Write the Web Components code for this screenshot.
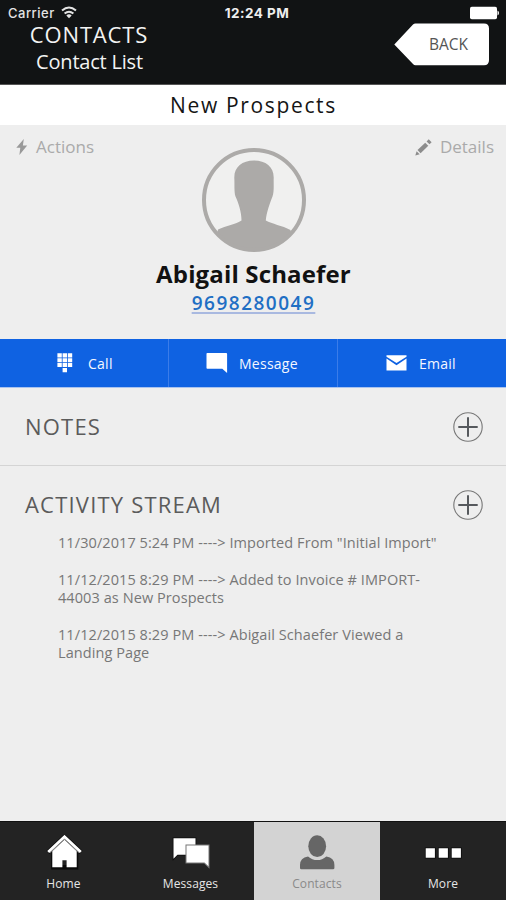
<!DOCTYPE html>
<html lang="en">
<head>
<meta charset="utf-8">
<title>Contacts</title>
<style>
  html, body {
    margin: 0;
    height: 900px;
    overflow: hidden;
  }
  body {
    background: #eee;
    font-family: "Open Sans", "Noto Sans", sans-serif;
    color: #555;
  }
</style>
</head>
<body>
<contact-app></contact-app>

<script>
const icons = {
  bolt: `<svg width="12" height="16" viewBox="0 0 12 16"><path fill="#999" d="M7.8 0 0.3 8.8h4L3.4 16 11.2 6.4H6.9z"/></svg>`,
  pencil: `<svg width="17" height="17" viewBox="0 0 17 17"><g fill="#8c8c8c"><path d="M0.3 16.5 1.6 12.2 4.7 15.3z"/><path d="M2.5 11.1 10.2 3.7 13.3 6.7 5.6 14.2z"/><path d="M11.6 2.4 13.7 0.3 16.6 3.2 14.5 5.3z"/></g></svg>`,
  keypad: `<svg width="16" height="20" viewBox="0 0 16 20"><path fill="#fff" d="M0.4 0.3h4.4v4.1H0.4zM5.6 0.3H10v4.1H5.6zM10.8 0.3h4.4v4.1h-4.4zM0.4 5.2h4.4v4.1H0.4zM5.6 5.2H10v4.1H5.6zM10.8 5.2h4.4v4.1h-4.4zM0.4 10.1h4.4v4H0.4zM5.6 10.1H10v4H5.6zM10.8 10.1h4.4v4h-4.4zM5.6 15H10v4.2H5.6z"/></svg>`,
  message: `<svg width="22" height="20" viewBox="0 0 22 20"><path fill="#fff" d="M1.3 0h18.8q1 0 1 1v19l-4.8-4.2H1.3q-.8 0-.8-.8V.8q0-.8.8-.8z"/></svg>`,
  mail: `<svg width="21" height="16" viewBox="0 0 21 16"><path fill="#fff" d="M0.5 0.3h20v1.5L10.5 8 0.5 1.8z"/><path fill="#fff" d="M0.5 3.5 10.5 10.2 20.5 3.5V15.6h-20z"/></svg>`,
  home: `<svg width="38" height="36" viewBox="0 0 38 36"><path fill="none" stroke="#0b0b0b" stroke-width="4.6" d="M3 17.400 19.500 2 36 17.400M8.500 16.500v15.800h22.500V16.500"/><path fill="#fff" d="M19.500 4 31.700 15.600V32.200H21.600v-7h-4.200v7H7.300V15.600z"/><path fill="none" stroke="#fff" stroke-width="2.900" d="M3.200 17 19.500 1.800 35.800 17"/><path fill="none" stroke="#777" stroke-width=".9" d="M5 18 19.500 4.600 34 18"/></svg>`,
  chat: `<svg width="40" height="36" viewBox="0 0 40 36"><path fill="#fff" stroke="#0b0b0b" stroke-width="1.600" paint-order="stroke" d="M2.500 3.300h22v16.500H6.500L2.500 23.800z"/><path fill="#fff" stroke="#777" stroke-width="2" paint-order="stroke" d="M15.500 10.500h22V31.300L33.500 27.500h-18z"/></svg>`,
  person: `<svg width="36" height="36" viewBox="0 0 36 36"><g fill="#666"><ellipse cx="18.200" cy="11.200" rx="8.900" ry="10.900"/><path d="M9 21.400Q13.200 25.100 18.200 25.100T27.400 21.400Q35.400 22.700 35.400 29.900v3q0 1.400-1.400 1.400H2.400Q1 34.300 1 32.900V29.900Q1 22.700 9 21.400z"/></g></svg>`,
  more: `<svg width="40" height="36" viewBox="0 0 40 36"><path fill="#fff" stroke="#0b0b0b" stroke-width="1.600" paint-order="stroke" d="M2.700 13.200h9.200v9.600H2.700zM15.700 13.200h9.200v9.600h-9.200zM28.700 13.200h9.200v9.600h-9.200z"/></svg>`
};

class StatusBar extends HTMLElement {
  constructor() {
    super();
    this.attachShadow({mode: 'open'}).innerHTML = `
    <style>
      :host {
        display: grid;
        grid-template-columns: 1fr auto 1fr;
        height: 23px;
        padding: 0 7px 0 8px;
        font: 500 13px/27px Inter, "Liberation Sans", sans-serif;
        color: #e4e4e4;
      }
      .carrier { display: flex; letter-spacing: .500px; }
      .carrier svg { margin: 6px 0 0 6px; }
      .time { font-weight: 700; font-size: 13.500px; letter-spacing: .450px; color: #eee; padding-left: 7px; }
      .battery { margin-top: 6px; justify-self: end; }
    </style>
    <div class="carrier"><span>Carrier</span>
      <svg width="16" height="13" viewBox="0 0 16 13"><g fill="none" stroke="#e4e4e4" stroke-width="2"><path d="M1 4.500Q8-1.600 15 4.500"/><path d="M3.600 7.600Q8 3.800 12.400 7.600"/></g><path fill="#e4e4e4" d="M5.300 9.400Q8 7.200 10.700 9.400L8 12.300z"/></svg>
    </div>
    <div class="time">12:24 PM</div>
    <svg class="battery" width="30" height="14" viewBox="0 0 30 14"><rect x="1" y=".7" width="27" height="12.600" rx="1.800" fill="#fff"/><path fill="#fff" d="M28.500 4.500q1.500 .6 1.500 2.500t-1.500 2.500z"/></svg>`;
  }
}
customElements.define('status-bar', StatusBar);

class BackButton extends HTMLElement {
  constructor() {
    super();
    this.attachShadow({mode: 'open'}).innerHTML = `
    <style>
      :host { display: grid; width: 96px; height: 43px; }
      svg, span { grid-area: 1 / 1; }
      span { padding-left: 35px; font-size: 15.500px; line-height: 43px; color: #555; }
    </style>
    <svg width="96" height="43" viewBox="0 0 96 43"><path fill="#fff" d="M.3 21.500 19 1.600Q20 .4 21.500 .4H90Q95 .4 95 5.400V37.200Q95 42.200 90 42.200H21.500Q20 42.200 19 41z"/></svg>
    <span><slot></slot></span>`;
  }
}
customElements.define('back-button', BackButton);

class AppHeader extends HTMLElement {
  constructor() {
    super();
    this.attachShadow({mode: 'open'}).innerHTML = `
    <style>
      :host { display: block; box-sizing: border-box; height: 85px; background: #111314; color: #f3f3f3; border-bottom: 1px solid #555; }
      .row { display: flex; justify-content: space-between; padding-right: 16px; }
      .titles { width: 178px; text-align: center; }
      .title { font-size: 22px; line-height: 23px; letter-spacing: .850px; }
      .sub { font-size: 20px; line-height: 31px; letter-spacing: -.200px; padding-left: 1px; }
    </style>
    <status-bar></status-bar>
    <div class="row">
      <div class="titles">
        <div class="title"><slot name="title"></slot></div>
        <div class="sub"><slot name="sub"></slot></div>
      </div>
      <back-button>BACK</back-button>
    </div>`;
  }
}
customElements.define('app-header', AppHeader);

// small icon + label link in the card's corners
class CardLink extends HTMLElement {
  connectedCallback() {
    this.attachShadow({mode: 'open'}).innerHTML = `
    <style>
      :host { display: flex; align-items: center; gap: 8px; height: 24px; font-size: 17px; line-height: 24px; color: #aaa; }
    </style>
    ${icons[this.getAttribute('icon')]}<span><slot></slot></span>`;
  }
}
customElements.define('card-link', CardLink);

class ContactCard extends HTMLElement {
  connectedCallback() {
    this.attachShadow({mode: 'open'}).innerHTML = `
    <style>
      :host { display: block; height: 214px; text-align: center; }
      .top { display: grid; grid-template-columns: 1fr 104px 1fr; height: 134px; padding: 0 12px 0 16px; box-sizing: border-box; }
      .top card-link { margin-top: 10px; justify-self: start; }
      .top card-link:last-child { justify-self: end; }
      .avatar { margin-top: 23px; margin-left: -1px; }
      .name { font-size: 24px; font-weight: 700; line-height: 30px; letter-spacing: .150px; padding-left: 1px; color: #111; }
      .phone { font-size: 19px; font-weight: 600; line-height: 28px; letter-spacing: 1.500px; padding-left: 1px; color: #1f6fc4; text-decoration: underline; text-decoration-color: #a9b9e0; text-decoration-thickness: 1.500px; text-underline-offset: 2px; }
    </style>
    <div class="top">
      <card-link icon="bolt">Actions</card-link>
      <svg class="avatar" width="104" height="104" viewBox="0 0 104 104">
        <defs><clipPath id="c"><circle cx="52" cy="52" r="51"/></clipPath></defs>
        <circle cx="52" cy="52" r="50" fill="#f0f0ef"/>
        <path clip-path="url(#c)" fill="#acaaa8" d="M52 12.500C64 12.500 72 19 71.700 30C71.500 36 72.300 44 70.500 48.500C68 55 64.500 64 63.800 72.500C70 76 80 77.500 88.500 82L92 104H12L16 81.500C24 78 34 76 39.500 72.500C39.500 64 36.500 55 33.500 48.500C32 44 32.700 36 32.300 30C32 19 40 12.500 52 12.500z"/>
        <circle cx="52" cy="52" r="50" fill="none" stroke="#acaaa8" stroke-width="4"/>
      </svg>
      <card-link icon="pencil">Details</card-link>
    </div>
    <div class="name">${this.getAttribute('name')}</div>
    <div><span class="phone">${this.getAttribute('phone')}</span></div>`;
  }
}
customElements.define('contact-card', ContactCard);

class ActionButton extends HTMLElement {
  connectedCallback() {
    this.attachShadow({mode: 'open'}).innerHTML = `
    <style>
      :host { display: flex; align-items: center; box-sizing: border-box; border-left: 1px solid #3b7ce9; padding-left: var(--pad); gap: var(--gap); font-size: 14px; letter-spacing: .250px; color: #f4f7ff; }
      :host(:first-child) { border-left: 0; }
    </style>
    ${icons[this.getAttribute('icon')]}<span><slot></slot></span>`;
  }
}
customElements.define('action-button', ActionButton);

class PanelHead extends HTMLElement {
  constructor() {
    super();
    this.attachShadow({mode: 'open'}).innerHTML = `
    <style>
      :host { display: flex; justify-content: space-between; align-items: center; height: 30px; padding: 0 23.500px 0 25px; font-size: 22px; line-height: 29px; letter-spacing: 1.200px; color: #5b5b5b; }
      span { margin-top: -1px; }
    </style>
    <span><slot></slot></span>
    <svg width="30" height="30" viewBox="0 0 30 30"><circle cx="15" cy="15" r="14.200" fill="none" stroke="#777" stroke-width="1.100"/><path stroke="#56595d" stroke-width="2" d="M15 5.300v19.400M5.300 15h19.400"/></svg>`;
  }
}
customElements.define('panel-head', PanelHead);

class TabItem extends HTMLElement {
  connectedCallback() {
    this.attachShadow({mode: 'open'}).innerHTML = `
    <style>
      :host { display: flex; flex-direction: column; align-items: center; padding-top: 13px; background: #232323; color: #e6e6e6; font-size: 12px; font-weight: 500; }
      :host([active]) { background: #d3d3d3; color: #8a8a8a; font-weight: 400; }
      span { line-height: 18px; margin-top: 4px; letter-spacing: .100px; }
    </style>
    ${icons[this.getAttribute('icon')]}<span><slot></slot></span>`;
  }
}
customElements.define('tab-item', TabItem);

class ContactApp extends HTMLElement {
  constructor() {
    super();
    this.attachShadow({mode: 'open'}).innerHTML = `
    <style>
      :host { display: flex; flex-direction: column; width: 506px; height: 900px; background: #eee; }
      .group { height: 40px; background: #fff; color: #151515; font-size: 21px; line-height: 40px; text-align: center; letter-spacing: 1.650px; padding-left: 1px; }
      .actions { display: grid; grid-template-columns: 168px 169px 169px; height: 48px; background: #0f62e2; border-bottom: 1px solid #a9c3ef; }
      .notes { padding: 24px 0 23px; border-bottom: 1px solid #d4d4d4; }
      .stream { flex: 1; padding-top: 24px; }
      .log { display: flex; flex-direction: column; gap: 18.400px; margin: 14px 60px 0 58px; font-size: 14.500px; line-height: 18.400px; letter-spacing: .080px; color: #777; }
      nav { display: grid; grid-template-columns: 127px 127px 126px 126px; height: 78px; border-top: 1px solid #111; }
    </style>
    <app-header><span slot="title">CONTACTS</span><span slot="sub">Contact List</span></app-header>
    <div class="group">New Prospects</div>
    <contact-card name="Abigail Schaefer" phone="9698280049"></contact-card>
    <div class="actions">
      <action-button icon="keypad" style="--pad: 57px; --gap: 15px">Call</action-button>
      <action-button icon="message" style="--pad: 37px; --gap: 11px">Message</action-button>
      <action-button icon="mail" style="--pad: 48px; --gap: 12px">Email</action-button>
    </div>
    <div class="notes"><panel-head>NOTES</panel-head></div>
    <div class="stream">
      <panel-head>ACTIVITY STREAM</panel-head>
      <div class="log">
        <div>11/30/2017 5:24 PM ----&gt; Imported From "Initial Import"</div>
        <div>11/12/2015 8:29 PM ----&gt; Added to Invoice # IMPORT-44003 as New Prospects</div>
        <div>11/12/2015 8:29 PM ----&gt; Abigail Schaefer Viewed a Landing Page</div>
      </div>
    </div>
    <nav>
      <tab-item icon="home">Home</tab-item>
      <tab-item icon="chat">Messages</tab-item>
      <tab-item icon="person" active>Contacts</tab-item>
      <tab-item icon="more">More</tab-item>
    </nav>`;
  }
}
customElements.define('contact-app', ContactApp);
</script>
</body>
</html>
